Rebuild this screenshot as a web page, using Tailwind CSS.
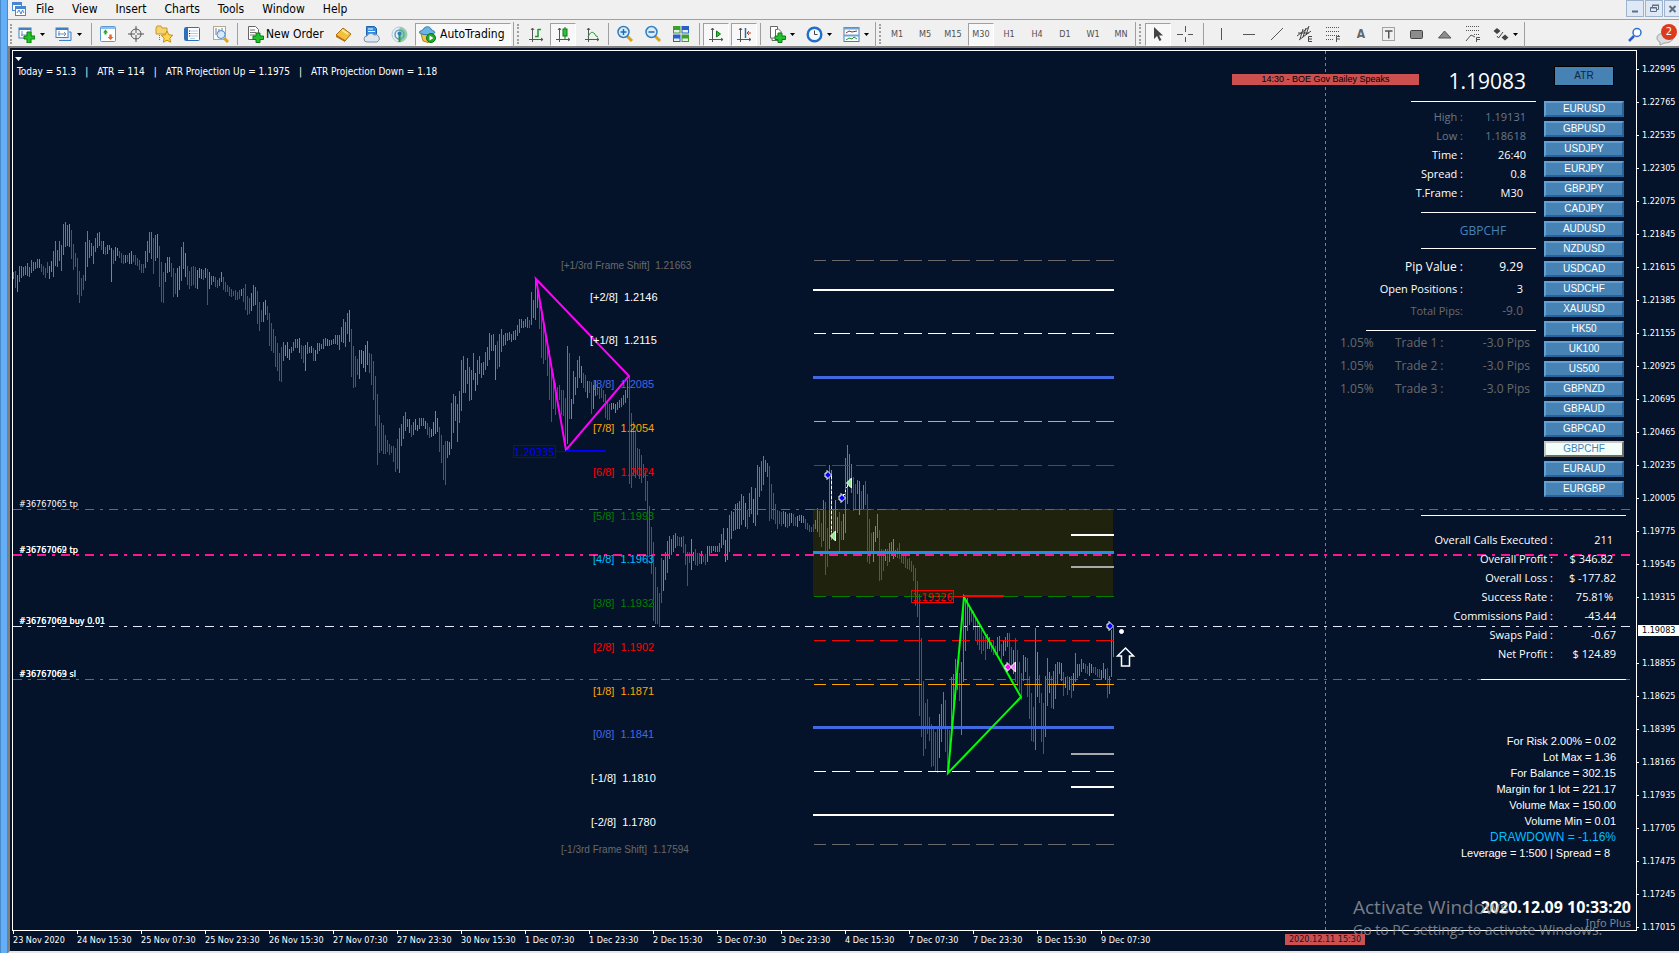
<!DOCTYPE html>
<html lang="en">
<head>
    <meta charset="UTF-8">
    <meta name="viewport" content="width=device-width, initial-scale=1.0">
    <title>GBPCHF,M30</title>
    <script src="https://cdn.jsdelivr.net/npm/@tailwindcss/browser@4"></script>
</head>
<body class="flex h-screen overflow-hidden bg-[#05132a] font-['DejaVu_Sans_Condensed','Noto_Sans',sans-serif] text-[12px] leading-4 text-black">

    <!-- window edge -->
    <div class="w-2 shrink-0 border-x border-[#4a8ac8] bg-[#62aef8]"></div>

    <div class="flex min-w-0 flex-1 flex-col">

        <!-- menu bar -->
        <nav class="flex h-[19px] shrink-0 items-center bg-[#f0f0f0] pb-[2px] pl-[3px]">
            <svg class="h-4 w-4" viewBox="0 0 16 16" fill="#fff" stroke="#4a86cf"><rect x="1.500" y="1.500" width="9" height="8"/><path d="M1 3h10" stroke-width="2"/><rect x="4.500" y="5.500" width="10" height="9"/><path d="M4 7h11" stroke-width="2"/><path d="M6 12l2-3 2 4 1.500-4 1.500 3" fill="none"/></svg>
            <button class="px-[9px]">File</button>
            <button class="px-[9px]">View</button>
            <button class="px-[9px]">Insert</button>
            <button class="px-[9px]">Charts</button>
            <button class="px-[9px]">Tools</button>
            <button class="px-[9px]">Window</button>
            <button class="px-[9px]">Help</button>
            <div class="ml-auto flex gap-px self-start">
                <button aria-label="Minimize" class="h-[17px] w-[18px] border border-[#9db4cc] bg-[#dfe9f5]"><svg viewBox="0 0 16 15"><path d="M5 10.500h6" stroke="#5c6f85" stroke-width="2"/></svg></button>
                <button aria-label="Restore" class="h-[17px] w-[18px] border border-[#9db4cc] bg-[#dfe9f5]"><svg viewBox="0 0 16 15" fill="none" stroke="#5c6f85"><path d="M6.500 6V4.500h6v4H11M6 4h7"/><path d="M4.500 6.500h6v4h-6zM4 7h7"/></svg></button>
                <button aria-label="Close" class="h-[17px] w-[15px] border border-r-0 border-[#9db4cc] bg-[#dfe9f5]"><svg viewBox="0 0 14 15"><path d="M4.500 5l6 6m0-6l-6 6" stroke="#5c6f85" stroke-width="2"/></svg></button>
            </div>
        </nav>

        <!-- toolbar -->
        <div class="flex h-[29px] shrink-0 items-center border-t border-b-2 border-t-[#a0a0a0] border-b-[#808080] bg-[#f0f0f0] pt-[2px] pl-[2px]">
            <i class="h-5 w-[3px] border-l-2 border-dotted border-[#a0a0a0]"></i>
            <button aria-label="New chart" class="flex w-[37px] items-center gap-[5px] pl-[5px]">
                <svg class="h-[17px] w-[17px]" viewBox="0 0 17 17"><rect x="1" y="2" width="12" height="10" fill="#fff" stroke="#3f7fc4"/><path d="M1 3h12" stroke="#3f7fc4" stroke-width="2"/><path d="M4 5v5M3 9h6" stroke="#6b8fb5"/><path d="M9 6h4v4h4v3h-4v4H9v-4H6v-3h3z" fill="#22c32b" stroke="#0b7d12"/></svg>
                <svg class="h-[3px] w-[5px]" viewBox="0 0 5 3"><path d="M0 0h5L2.500 3z"/></svg>
            </button>
            <button aria-label="Profiles" class="flex w-[37px] items-center gap-[5px] pl-[5px]">
                <svg class="h-[17px] w-[17px]" viewBox="0 0 17 17"><path d="M4 14.500h12V6h-2" fill="#dbe9f8" stroke="#3f7fc4"/><rect x="1" y="2" width="12" height="9.500" fill="#fff" stroke="#3f7fc4"/><path d="M1 3h12" stroke="#3f7fc4" stroke-width="2"/><path d="M4 5v5M3 8h8M9 6l2 2-2 2" fill="none" stroke="#6b8fb5"/></svg>
                <svg class="h-[3px] w-[5px]" viewBox="0 0 5 3"><path d="M0 0h5L2.500 3z"/></svg>
            </button>
            <i class="mr-[2px] ml-1 h-[22px] w-px bg-[#a0a0a0]"></i>
            <button aria-label="Market watch" class="w-7"><svg class="mx-auto h-4 w-4" viewBox="0 0 16 16"><rect x=".5" y=".5" width="15" height="15" rx="1" fill="#fff" stroke="#5b9bd5"/><path d="M1 2h14" stroke="#8fc0ec" stroke-width="2"/><path d="M5.500 3.500L3 6.500h1.500v2h2v-2H8z" fill="#22a52b"/><path d="M10.500 14L7.500 11h1.800V8.500h2.400V11h1.800z" fill="#f0602c"/></svg></button>
            <button aria-label="Data window" class="w-7"><svg class="mx-auto h-4 w-4" viewBox="0 0 16 16" fill="none" stroke="#555"><circle cx="8" cy="8" r="5"/><path d="M8 0v7M8 9v7M0 8h7M9 8h7"/></svg></button>
            <button aria-label="Navigator" class="w-7"><svg class="mx-auto h-[18px] w-[18px]" viewBox="0 0 18 18"><path d="M1 3l1-2h4l1 2h5v6H1z" fill="#f6d36b" stroke="#c79a2a"/><path d="M4.500 10v6" stroke="#777" stroke-dasharray="1 1"/><path d="M12 6l1.800 3.800 4 .5-3 2.800.8 4.100-3.600-2-3.600 2 .8-4.100-3-2.800 4-.5z" fill="#ffd84a" stroke="#c98d12"/></svg></button>
            <button aria-label="Terminal" class="w-7"><svg class="mx-auto h-4 w-4" viewBox="0 0 16 16"><rect x=".5" y="1.500" width="15" height="13" rx="1" fill="#fff" stroke="#2f6fb8"/><path d="M2.500 2v12" stroke="#2f6fb8" stroke-width="3"/><path d="M6 5h8M6 7.500h8M6 10h8M6 12.500h5" stroke="#b7cbe2"/><path d="M5 5h1M5 7.500h1M5 10h1" stroke="#223"/></svg></button>
            <button aria-label="Strategy tester" class="w-7"><svg class="mx-auto h-[17px] w-[17px]" viewBox="0 0 17 17"><rect x="1.500" y=".5" width="12" height="13" fill="#fafafa" stroke="#b5a98f"/><path d="M4 2v7M7 3v5M10 2v4" stroke="#6b7f95"/><path d="M12 12l4 4" stroke="#d9a21f" stroke-width="3"/><circle cx="9" cy="8.500" r="4" fill="#cfe6fb" fill-opacity=".8" stroke="#4f8fce"/></svg></button>
            <i class="mr-[2px] ml-[3px] h-[22px] w-px bg-[#a0a0a0]"></i>
            <button class="flex w-[89px] items-center gap-[2px] pl-[7px] whitespace-nowrap">
                <svg class="h-[17px] w-[17px] shrink-0" viewBox="0 0 17 17"><path d="M1.500.5h7l3 3v10h-10z" fill="#fff" stroke="#666"/><path d="M3 4h5M3 6.500h6M3 9h5" stroke="#777"/><path d="M9 7h4v3h3.500v3.500H13v3H9v-3H6V10h3z" fill="#22c32b" stroke="#0b7d12"/></svg>
                New Order
            </button>
            <button aria-label="MetaEditor" class="w-7"><svg class="mx-auto h-[17px] w-[17px]" viewBox="0 0 17 17"><path d="M1 9l7-7 8 6-6 7z" fill="#f4bf3a" stroke="#a86d0c"/><path d="M1 9l9 5v2L1 11z" fill="#b57412"/><path d="M7 4l6 4" stroke="#ffe694" stroke-width="2"/></svg></button>
            <button aria-label="Cloud" class="w-7"><svg class="mx-auto h-[17px] w-[17px]" viewBox="0 0 17 17"><path d="M3.500.5h8l2 2v7h-10z" fill="#2f8fe6" stroke="#1c62ad"/><path d="M5 3h5M5 5.500h7" stroke="#fff"/><path d="M4 16a3 3 0 010-6 4 4 0 017-1 3.500 3.500 0 013 7z" fill="#dfe6ee" stroke="#7f93aa"/></svg></button>
            <button aria-label="Signals" class="w-7"><svg class="mx-auto h-[17px] w-[17px]" viewBox="0 0 17 17" fill="none"><circle cx="8.500" cy="8.500" r="7.500" stroke="#a9cbe0"/><path d="M8.500 1a7.500 7.500 0 010 15z" fill="#8fd09a"/><circle cx="8.500" cy="8.500" r="4.500" stroke="#5f9fc4" stroke-width="1.500"/><circle cx="8.500" cy="7.500" r="2" fill="#2f7fc0"/><path d="M8.500 9v7" stroke="#2c9c3c" stroke-width="2"/></svg></button>
            <button class="ml-[2px] flex h-[23px] w-24 items-center gap-1 border border-t-[#a0a0a0] border-r-white border-b-white border-l-[#a0a0a0] bg-[#f8f8f8] pl-[3px] whitespace-nowrap">
                <svg class="h-[17px] w-[17px] shrink-0" viewBox="0 0 17 17"><path d="M2 8l2 7 5 1.500 4-3V8z" fill="#f2c14a" stroke="#b5841b"/><path d="M0 6.500C1 4 4 5 4.500 3 6 0 11 0 12 3c.5 2 3 1 4 3.500-3 3-12 3-16 0z" fill="#69b5e6" stroke="#3579ab"/><circle cx="12" cy="12" r="4.500" fill="#1fa92c" stroke="#0c7216"/><path d="M10.500 9.500v5l4-2.500z" fill="#fff"/></svg>
                AutoTrading
            </button>
            <i class="mr-[3px] ml-[2px] h-[25px] w-px bg-[#a0a0a0]"></i>
            <i class="mr-[2px] h-5 w-[3px] border-l-2 border-dotted border-[#a0a0a0]"></i>
            <button aria-label="Bar chart" class="w-7"><svg class="mx-auto h-[15px] w-[15px]" viewBox="0 0 15 15" fill="none" stroke="#555"><path d="M3.500 1v14M0 12.500h14M2 3l1.500-2L5 3M12 11l2 1.500-2 1.500"/><path d="M6 9.500h3V2M9 2.500h3" stroke="#1a9a2a" stroke-width="1.500"/></svg></button>
            <button aria-label="Candlesticks" class="h-[23px] w-[26px] border border-t-[#a0a0a0] border-r-white border-b-white border-l-[#a0a0a0] bg-[#f8f8f8]"><svg class="mx-auto h-[15px] w-[15px]" viewBox="0 0 15 15" fill="none" stroke="#555"><path d="M3.500 1v14M0 12.500h14M2 3l1.500-2L5 3M12 11l2 1.500-2 1.500"/><path d="M9 0v12" stroke="#0b7d12"/><rect x="7" y="2" width="4" height="7" fill="#2fc23a" stroke="#0b7d12"/></svg></button>
            <button aria-label="Line chart" class="ml-[2px] w-7"><svg class="mx-auto h-[15px] w-[15px]" viewBox="0 0 15 15" fill="none" stroke="#555"><path d="M3.500 1v14M0 12.500h14M2 3l1.500-2L5 3M12 11l2 1.500-2 1.500"/><path d="M3 10c2-5 5-7 8-1l2 1" stroke="#1a9a2a"/></svg></button>
            <i class="mr-[2px] ml-[2px] h-[22px] w-px bg-[#a0a0a0]"></i>
            <button aria-label="Zoom in" class="w-7"><svg class="mx-auto h-[18px] w-[18px]" viewBox="0 0 18 18"><path d="M11 11l5 5" stroke="#d9a21f" stroke-width="3"/><circle cx="7.500" cy="7" r="5.500" fill="#d8ecfc" stroke="#2f7fc4" stroke-width="1.500"/><path d="M4.500 7h6M7.500 4v6" stroke="#2567ae" stroke-width="1.500"/></svg></button>
            <button aria-label="Zoom out" class="w-7"><svg class="mx-auto h-[18px] w-[18px]" viewBox="0 0 18 18"><path d="M11 11l5 5" stroke="#d9a21f" stroke-width="3"/><circle cx="7.500" cy="7" r="5.500" fill="#d8ecfc" stroke="#2f7fc4" stroke-width="1.500"/><path d="M4.500 7h6" stroke="#2567ae" stroke-width="1.500"/></svg></button>
            <button aria-label="Tile windows" class="w-7"><svg class="mx-auto h-4 w-4" viewBox="0 0 16 16"><path d="M0 0h7.500v7.500H0zM8.500 8.500H16V16H8.500z" fill="#3f9f2c"/><path d="M8.500 0H16v7.500H8.500zM0 8.500h7.500V16H0z" fill="#2a5fd0"/><path d="M1 4h5.500v2.500H1zM9.500 4H15v2.500H9.500zM1 12.500h5.500V15H1zM9.500 12.500H15V15H9.500z" fill="#e6f0e6"/></svg></button>
            <i class="mr-[3px] ml-[4px] h-[22px] w-px bg-[#a0a0a0]"></i>
            <button aria-label="Auto scroll" class="h-[23px] w-[26px] border border-t-[#a0a0a0] border-r-white border-b-white border-l-[#a0a0a0] bg-[#f8f8f8]"><svg class="mx-auto h-[15px] w-[15px]" viewBox="0 0 15 15" fill="none" stroke="#555"><path d="M3.500 1v14M0 12.500h14M2 3l1.500-2L5 3M12 11l2 1.500-2 1.500"/><path d="M7.500 4v6l4-3z" fill="#2fc23a" stroke="#0b7d12"/></svg></button>
            <button aria-label="Chart shift" class="ml-[2px] h-[23px] w-[26px] border border-t-[#a0a0a0] border-r-white border-b-white border-l-[#a0a0a0] bg-[#f8f8f8]"><svg class="mx-auto h-[15px] w-[15px]" viewBox="0 0 15 15" fill="none" stroke="#555"><path d="M3.500 1v14M0 12.500h14M2 3l1.500-2L5 3M12 11l2 1.500-2 1.500"/><path d="M8.500 1v10" stroke="#1f6fb0" stroke-width="1.500"/><path d="M14 6h-4M12 4l-2 2 2 2" stroke="#b8401c"/></svg></button>
            <i class="mr-[3px] ml-[3px] h-[22px] w-px bg-[#a0a0a0]"></i>
            <button aria-label="Indicators" class="flex w-[37px] items-center gap-[4px] pl-[5px]">
                <svg class="h-[17px] w-[17px]" viewBox="0 0 17 17"><path d="M3 2.500h6l3 3v9H3z" fill="#fff" stroke="#666"/><path d="M1.500.5h7v3h-2V12h-5z" fill="#fff" stroke="#666"/><path d="M9 7h4v3h3.500v3.500H13v3H9v-3H6V10h3z" fill="#22c32b" stroke="#0b7d12"/></svg>
                <svg class="h-[3px] w-[5px]" viewBox="0 0 5 3"><path d="M0 0h5L2.500 3z"/></svg>
            </button>
            <button aria-label="Periods" class="flex w-[37px] items-center gap-[4px] pl-[5px]">
                <svg class="h-[17px] w-[17px]" viewBox="0 0 17 17"><circle cx="8.500" cy="8.500" r="6.800" fill="#f4f9ff" stroke="#1f6fc8" stroke-width="2.400"/><path d="M8.500 4.500v4h3" fill="none" stroke="#444"/></svg>
                <svg class="h-[3px] w-[5px]" viewBox="0 0 5 3"><path d="M0 0h5L2.500 3z"/></svg>
            </button>
            <button aria-label="Templates" class="flex w-[37px] items-center gap-[4px] pl-[5px]">
                <svg class="h-[17px] w-[17px]" viewBox="0 0 17 17" fill="none"><rect x="1" y="1.500" width="15" height="14" fill="#fff" stroke="#3f7fc4"/><path d="M1 2.500h15M1 9.500h15" stroke="#6ea6dc" stroke-width="2"/><path d="M3 7l3-2 3 1 5-1" stroke="#9c2f1f"/><path d="M3 14l3-2 3 1 2-2 3 2" stroke="#1f8f2f"/></svg>
                <svg class="h-[3px] w-[5px]" viewBox="0 0 5 3"><path d="M0 0h5L2.500 3z"/></svg>
            </button>
            <i class="mr-[3px] h-[25px] w-px bg-[#a0a0a0]"></i>
            <i class="mr-px h-5 w-[3px] border-l-2 border-dotted border-[#a0a0a0]"></i>
            <div class="flex text-[9px] text-[#505050]">
                <button class="h-[23px] w-7">M1</button>
                <button class="h-[23px] w-7">M5</button>
                <button class="h-[23px] w-7">M15</button>
                <button class="mx-px h-[23px] w-[26px] border border-t-[#a0a0a0] border-r-white border-b-white border-l-[#a0a0a0] bg-[#f8f8f8]">M30</button>
                <button class="h-[23px] w-7">H1</button>
                <button class="h-[23px] w-7">H4</button>
                <button class="h-[23px] w-7">D1</button>
                <button class="h-[23px] w-7">W1</button>
                <button class="h-[23px] w-7">MN</button>
            </div>
            <i class="mr-[3px] h-[25px] w-px bg-[#a0a0a0]"></i>
            <i class="mr-[3px] h-5 w-[3px] border-l-2 border-dotted border-[#a0a0a0]"></i>
            <button aria-label="Cursor" class="h-[23px] w-[26px] border border-t-[#a0a0a0] border-r-white border-b-white border-l-[#a0a0a0] bg-[#f8f8f8]"><svg class="mx-auto h-[15px] w-[15px]" viewBox="0 0 15 15"><path d="M3 0v12l3-3 2.500 5 2-1L8 8.500h4z" fill="#444"/></svg></button>
            <button aria-label="Crosshair" class="w-7"><svg class="mx-auto h-4 w-4" viewBox="0 0 16 16"><path d="M8.500 0v6M8.500 11v5M0 8.500h6M11 8.500h5" stroke="#555"/></svg></button>
            <i class="mr-[3px] ml-[4px] h-[22px] w-px bg-[#a0a0a0]"></i>
            <button aria-label="Vertical line" class="w-7"><svg class="mx-auto h-4 w-4" viewBox="0 0 16 16"><path d="M8.500 2v12" stroke="#555"/></svg></button>
            <button aria-label="Horizontal line" class="w-7"><svg class="mx-auto h-4 w-4" viewBox="0 0 16 16"><path d="M2 8.500h12" stroke="#555"/></svg></button>
            <button aria-label="Trendline" class="w-7"><svg class="mx-auto h-4 w-4" viewBox="0 0 16 16"><path d="M2 14L14 2" stroke="#555"/></svg></button>
            <button aria-label="Equidistant channel" class="w-7"><svg class="mx-auto h-4 w-4" viewBox="0 0 16 16" fill="none" stroke="#444"><path d="M0 10l12-9M2 14l12-9M3 13L6 3M6 11l3-9M9 9l3-9M1 7h11"/><path d="M15 10.500h-3.500v5H15M12 13h3"/></svg></button>
            <button aria-label="Fibonacci retracement" class="w-7"><svg class="mx-auto h-4 w-4" viewBox="0 0 16 16" fill="none" stroke="#555"><path d="M1 1.500h13M1 5.500h13M1 9.500h13M1 13.500h8" stroke-dasharray="1 1"/><path d="M15 10.500h-3.500v5.500M12 13h3"/></svg></button>
            <button aria-label="Text" class="w-7 font-bold text-[#666]">A</button>
            <button aria-label="Text label" class="w-7"><svg class="mx-auto h-4 w-4" viewBox="0 0 16 16" fill="none" stroke="#555"><rect x="1.500" y="1.500" width="12" height="13" stroke-dasharray="1 1"/><path d="M4 5h7.500" stroke-width="1.500"/><path d="M7.750 5v7.500" stroke-width="1.500"/></svg></button>
            <button aria-label="Rectangle" class="w-7"><svg class="mx-auto h-4 w-4" viewBox="0 0 16 16"><rect x="1.500" y="4.500" width="12" height="8" rx="1" fill="#8c8c8c" stroke="#444"/></svg></button>
            <button aria-label="Triangle" class="w-7"><svg class="mx-auto h-4 w-4" viewBox="0 0 16 16"><path d="M1.500 12L7.500 5l6.500 7z" fill="#8c8c8c" stroke="#555"/></svg></button>
            <button aria-label="Fibonacci expansion" class="w-7"><svg class="mx-auto h-4 w-4" viewBox="0 0 16 16" fill="none" stroke="#555"><path d="M1 .5h14M1 4.500h14M9 8.500h6" stroke-dasharray="1 1"/><path d="M1 15l5-6 4 2M15 11.500h-3.500V16M12 13.500h3"/></svg></button>
            <button aria-label="Arrows" class="flex w-[37px] items-center gap-[4px] pl-[6px]">
                <svg class="h-4 w-4" viewBox="0 0 16 16" fill="#444"><path d="M4 2l3.500 3L4 8 .5 5zM12 8.500l3.500 3-3.500 3-3.500-3z"/><path d="M4 10l1.500 2L10 6" fill="none" stroke="#444"/></svg>
                <svg class="h-[3px] w-[5px]" viewBox="0 0 5 3"><path d="M0 0h5L2.500 3z"/></svg>
            </button>
            <i class="h-[25px] w-px bg-[#a0a0a0]"></i>
            <button aria-label="Search" class="ml-auto"><svg class="h-[15px] w-[15px]" viewBox="0 0 15 15"><path d="M6 9l-5 5" stroke="#2a5fd0" stroke-width="2.500"/><circle cx="9" cy="5.500" r="4" fill="#fff" stroke="#2f6fd6" stroke-width="1.500"/></svg></button>
            <button aria-label="Messages" class="relative ml-[10px] h-[25px] w-[26px]">
                <svg class="h-full w-full" viewBox="0 0 26 25"><path d="M12 11c-5 0-8 2-8 5 0 2 1 3 3 4l0 3 4-2c5 0 9-2 9-5s-3-5-8-5z" fill="#dadde0" stroke="#9aa0a6"/></svg>
                <span class="absolute top-[2px] right-[2px] h-4 w-4 rounded-full bg-[#dc3a1c] text-center text-[11px] leading-4 text-white">2</span>
            </button>
        </div>

        <!-- chart window -->
        <main class="flex min-h-0 flex-1 flex-col border-b-2 border-l-2 border-b-[#e6e6e6] border-l-[#808080] pt-[2px] pl-[2px] text-white">
            <div class="flex min-h-0 flex-1">
                <section class="relative min-w-0 flex-1 border border-white">
                    <svg class="absolute inset-0 h-full w-full" viewBox="13 51 1623 879" preserveAspectRatio="xMinYMin meet" fill="none" shape-rendering="crispEdges">
                        <rect x="813" y="510" width="300" height="86" fill="#1f220d"/>
                        <path d="M1325.500 51V930" stroke="#cd5c5c" stroke-dasharray="3 3"/>
                        <g id="bars"></g>

                        <!-- murrey levels -->
                        <g stroke-dasharray="18 6" stroke-dashoffset="6">
                            <path d="M814 260.500h300M814 844.500h300" stroke="#696969"/>
                            <path d="M814 333.500h300" stroke="#fff"/>
                            <path d="M814 771.500h300" stroke="#fff"/>
                            <path d="M814 421.500h300" stroke="#ffa500"/>
                            <path d="M814 684.500h300" stroke="#ffa500"/>
                            <path d="M814 465.500h300" stroke="#ff0000"/>
                            <path d="M814 640.500h300" stroke="#ff0000"/>
                            <path d="M814 509.500h300" stroke="#008000"/>
                            <path d="M814 596.500h300" stroke="#008000"/>
                        </g>
                        <path d="M813 290h301M813 815h301M1071 535h43M1071 787h43" stroke="#fff" stroke-width="2"/>
                        <path d="M1071 567h43M1071 754h43" stroke="#a9a9a9" stroke-width="2"/>
                        <path d="M813 377.500h301M813 727.500h301" stroke="#4169e1" stroke-width="3"/>
                        <path d="M813 552.500h301" stroke="#1e90e8" stroke-width="3"/>

                        <!-- order lines -->
                        <g stroke-dasharray="9 6 3 6">
                            <path d="M13 509.500H1630" stroke="#ff1493"/>
                            <path d="M13 555H1630" stroke="#ff1493" stroke-width="2"/>
                            <path d="M13 626.500H1630" stroke="#e6e6fa"/>
                            <path d="M13 679.500H1630" stroke="#ff1493"/>
                        </g>
                        <path d="M831.500 476v56M843 497l5-12" stroke="#fff" stroke-dasharray="3 2"/>

                        <g shape-rendering="auto">
                            <path d="M536 279l93 97-63 74z" stroke="#ff00ff" stroke-width="2"/>
                            <path d="M964 597l57 100-73 76z" stroke="#00ff00" stroke-width="2"/>
                        </g>
                        <path d="M556 451.500h10" stroke="#0000ff"/>
                        <path d="M566 451h40" stroke="#0000ff" stroke-width="2"/>
                        <rect x="513.500" y="445.500" width="42" height="12" stroke="#0000ff"/>
                        <path d="M954 596.500h10" stroke="#ff0000"/>
                        <path d="M964 596h40" stroke="#ff0000" stroke-width="2"/>
                        <rect x="911.500" y="590.500" width="42" height="12" stroke="#ff0000"/>

                        <!-- trade arrows -->
                        <g shape-rendering="auto" stroke="#fff">
                            <path id="buy" d="M825 473h2v-2.500l4.500 4.500-4.500 4.500V477h-2z" fill="#0000ff"/>
                            <use href="#buy" x="14" y="23"/>
                            <use href="#buy" x="282" y="151"/>
                            <path d="M851.500 478v10l-5-5z" fill="#90ee90"/>
                            <path d="M835.500 531v10l-5-5z" fill="#90ee90"/>
                            <path d="M1005 665h2v-2.500l4.500 4.500-4.500 4.500V669h-2z" fill="#ff00ff"/>
                            <path d="M1015.500 662v10l-5-5z" fill="#ee82ee"/>
                            <circle cx="1121.500" cy="631.500" r="2" fill="#fff"/>
                            <path d="M1125.500 648l8 8h-4V666h-8v-10h-4z" stroke-width="1.500"/>
                            <path d="M15 57h7l-3.500 4z" fill="#fff" stroke="none"/>
                        </g>

                        <g class="font-['DejaVu_Sans_Condensed','Noto_Sans',sans-serif] text-[9px]" fill="#fff">
                            <text x="19" y="507">#36767065 tp</text>
                            <text x="19" y="553">#36767062 tp</text><text x="19" y="553">#36767069 tp</text>
                            <text x="19" y="624">#36767063 buy 0.01</text><text x="19" y="624">#36767069 buy 0.01</text>
                            <text x="19" y="677">#36767063 sl</text><text x="19" y="677">#36767069 sl</text>
                        </g>
                        <g class="font-['DejaVu_Sans_Condensed','Noto_Sans',sans-serif] text-[11px]">
                            <text x="514" y="456" fill="#0000ff">1.20335</text>
                            <text x="912" y="601" fill="#ff0000">1.19326</text>
                        </g>
                        <g class="font-['Liberation_Sans',Arial,sans-serif] text-[10px]" fill="#696969">
                            <text x="561" y="269">[+1/3rd Frame Shift] &nbsp;1.21663</text>
                            <text x="561" y="853">[-1/3rd Frame Shift] &nbsp;1.17594</text>
                        </g>
                        <g class="font-['Liberation_Sans',Arial,sans-serif] text-[11px]">
                            <text x="590" y="301" fill="#fff">[+2/8] &nbsp;1.2146</text>
                            <text x="590" y="344" fill="#fff">[+1/8] &nbsp;1.2115</text>
                            <text x="593" y="388" fill="#4169e1">[8/8] &nbsp;1.2085</text>
                            <text x="593" y="432" fill="#ffa500">[7/8] &nbsp;1.2054</text>
                            <text x="593" y="476" fill="#ff0000">[6/8] &nbsp;1.2024</text>
                            <text x="593" y="520" fill="#008000">[5/8] &nbsp;1.1993</text>
                            <text x="593" y="563" fill="#00bfff">[4/8] &nbsp;1.1963</text>
                            <text x="593" y="607" fill="#008000">[3/8] &nbsp;1.1932</text>
                            <text x="593" y="651" fill="#ff0000">[2/8] &nbsp;1.1902</text>
                            <text x="593" y="695" fill="#ffa500">[1/8] &nbsp;1.1871</text>
                            <text x="593" y="738" fill="#4169e1">[0/8] &nbsp;1.1841</text>
                            <text x="591" y="782" fill="#fff">[-1/8] &nbsp;1.1810</text>
                            <text x="591" y="826" fill="#fff">[-2/8] &nbsp;1.1780</text>
                        </g>
                    </svg>

                    <!-- ATR line -->
                    <p class="absolute top-[13px] left-[4px] flex gap-[9px] text-[10px] leading-4 whitespace-nowrap">
                        <span>Today = 51.3</span><span>|</span><span>ATR = 114</span><span>|</span><span>ATR Projection Up = 1.1975</span><span>|</span><span>ATR Projection Down = 1.18</span>
                    </p>

                    <p class="absolute top-[23px] right-[217px] h-[11px] w-[187px] bg-[#cd5050] text-center font-['Liberation_Sans',Arial,sans-serif] text-[9px] leading-[11px] text-black">14:30 - BOE Gov Bailey Speaks</p>

                    <!-- symbol info -->
                    <aside class="absolute top-[15px] right-[100px] flex w-[196px] flex-col items-end font-['Open_Sans','Noto_Sans',sans-serif] text-[11px] leading-[19px]">
                        <p class="mb-[5px] pr-[10px] text-[21px] leading-[30px]">1.19083</p>
                        <hr class="mb-[5px] w-[125px] border-white">
                        <dl class="grid grid-cols-[1fr_63px] pr-[10px] text-right">
                            <dt class="text-[#6b7886]">High :</dt><dd class="text-[#6b7886]">1.19131</dd>
                            <dt class="text-[#6b7886]">Low :</dt><dd class="text-[#6b7886]">1.18618</dd>
                            <dt>Time :</dt><dd>26:40</dd>
                            <dt>Spread :</dt><dd>0.8</dd>
                            <dt>T.Frame :</dt><dd class="pr-[3px]">M30</dd>
                        </dl>
                        <hr class="mt-[10px] w-[115px] border-white">
                        <p class="w-[106px] text-center text-[12px] leading-[35px] text-[#4682b4]">GBPCHF</p>
                        <hr class="mb-[7px] w-[115px] border-white">
                        <dl class="mb-[8px] grid grid-cols-[1fr_60px] pr-[13px] text-right text-[12px] leading-[22px]">
                            <dt>Pip Value :</dt><dd>9.29</dd>
                            <dt class="text-[11px]">Open Positions :</dt><dd class="text-[11px]">3</dd>
                            <dt class="text-[11px] text-[#696969]">Total Pips:</dt><dd class="text-[#696969]">-9.0</dd>
                        </dl>
                        <hr class="w-[170px] border-white">
                        <table class="w-full text-[12px] leading-[23px] text-[#696969]">
                            <tr><td class="w-[55px]">1.05%</td><td>Trade 1 :</td><td class="pr-[6px] text-right">-3.0 Pips</td></tr>
                            <tr><td>1.05%</td><td>Trade 2 :</td><td class="pr-[6px] text-right">-3.0 Pips</td></tr>
                            <tr><td>1.05%</td><td>Trade 3 :</td><td class="pr-[6px] text-right">-3.0 Pips</td></tr>
                        </table>
                    </aside>

                    <!-- pair buttons -->
                    <button class="absolute top-[15px] right-[22px] h-5 w-[60px] border border-black bg-[#4682b4] font-['Liberation_Sans',Arial,sans-serif] text-[10px] text-[#10253f]">ATR</button>
                    <div id="pairs" class="absolute top-[50px] right-[12px] flex w-20 flex-col gap-1 font-['Liberation_Sans',Arial,sans-serif] text-[10px]"></div>

                    <!-- account stats -->
                    <aside class="absolute top-[464px] right-[10px] flex w-[205px] flex-col items-end font-['Open_Sans','Noto_Sans',sans-serif] text-[11px] leading-[19px]">
                        <hr class="mb-[14px] w-full border-white">
                        <dl class="grid grid-cols-[1fr_63px] pr-[10px] text-right whitespace-nowrap">
                            <dt>Overall Calls Executed :</dt><dd class="pr-[3px]">211</dd>
                            <dt>Overall Profit :</dt><dd class="pr-[3px]">$ 346.82</dd>
                            <dt>Overall Loss :</dt><dd>$ -177.82</dd>
                            <dt>Success Rate :</dt><dd class="pr-[3px]">75.81%</dd>
                            <dt>Commissions Paid :</dt><dd>-43.44</dd>
                            <dt>Swaps Paid :</dt><dd>-0.67</dd>
                            <dt>Net Profit :</dt><dd>$ 124.89</dd>
                        </dl>
                        <hr class="mt-[16px] w-[145px] border-white">
                    </aside>

                    <!-- risk -->
                    <ul class="absolute top-[682px] right-[20px] text-right font-['Liberation_Sans',Arial,sans-serif] text-[11px] leading-4">
                        <li>For Risk 2.00% = 0.02</li>
                        <li>Lot Max = 1.36</li>
                        <li>For Balance = 302.15</li>
                        <li>Margin for 1 lot = 221.17</li>
                        <li>Volume Max = 150.00</li>
                        <li>Volume Min = 0.01</li>
                        <li class="text-[12px] text-[#00bfff]">DRAWDOWN = -1.16%</li>
                        <li class="pr-[6px]">Leverage = 1:500 | Spread = 8</li>
                    </ul>

                    <!-- clock -->
                    <div class="absolute top-[846px] right-[5px] text-right font-['Noto_Sans','Open_Sans',sans-serif]">
                        <p class="text-[16px] leading-5 font-bold">2020.12.09 10:33:20</p>
                        <p class="text-[11px] leading-3 text-[#7b8694]">Info Plus</p>
                    </div>
                    <div class="absolute top-[844px] right-[29px] w-[254px] font-['Open_Sans','Noto_Sans',sans-serif] whitespace-nowrap text-[#a0a4a9]/75">
                        <p class="text-[19px] leading-6">Activate Windows</p>
                        <p class="text-[14px] leading-[22px]">Go to PC settings to activate Windows.</p>
                    </div>
                </section>

                <!-- price scale -->
                <div id="prices" class="flex w-[42px] shrink-0 flex-col pt-[3px] text-[9px] leading-[11px]"></div>
            </div>

            <!-- time scale -->
            <div class="relative h-5 shrink-0 text-[9px]">
                <div id="times" class="flex pl-px"></div>
                <span class="absolute top-[3px] right-[314px] h-[11px] w-20 bg-[#cd5050] text-center leading-[11px] whitespace-nowrap text-[#10182a]">2020.12.11 15:30</span>
            </div>
        </main>
    </div>

    <script>
        // one entry per bar: colour, high, low
        const bars = `
        B272,279 R271,288 G275,292 B266,282 B266,278 B267,276 B266,275 B263,276 B267,277 B260,273 B262,271 B262,269 B259,268 G259,268 R264,272 R266,275 R268,278 R262,273 G266,279 G261,272
        B251,277 B241,266 B250,267 B241,261 B245,271 B224,255 B222,247 B225,246 G224,247 R230,259 R244,270 R253,267 R258,295 R271,303 R278,296 R275,290 B242,281 B231,267 B240,258 B243,256
        B246,264 B238,252 B233,248 B232,246 R241,250 G241,254 R247,255 G245,254 B245,250 G248,282 R250,264 G247,261 G248,256 R251,258 R253,263 R255,264 G255,263 R255,262 G253,264 G251,264
        R255,262 R255,265 R258,266 R260,270 R264,273 R264,273 B251,268 B241,262 B232,253 B232,259 R238,274 B235,261 G234,258 R246,287 R262,302 R272,303 B263,282 G257,273 G257,272 R263,277
        R268,297 R273,294 G268,297 G266,290 B247,281 B242,269 G253,277 R266,285 R271,289 R267,286 R266,285 R267,288 G270,289 G268,278 G269,279 R270,280 G268,278 R269,305 G272,289 B276,285
        B276,282 R277,287 R280,288 B278,286 G272,282 R277,290 R282,292 R285,292 R287,296 R289,297 R291,296 R290,300 R292,300 R290,299 G289,296 R288,302 R284,310 R296,315 R298,314 G293,311
        B285,306 B287,305 R291,324 R302,331 R310,322 G302,322 G300,315 R306,320 R313,346 R323,351 R329,353 R336,367 R343,371 R353,381 R347,382 B342,361 G345,356 G342,358 G349,360 B347,353
        B342,351 B339,348 B339,348 G338,353 R345,359 R346,363 G345,371 B342,354 B347,353 G346,353 R348,361 G350,361 B343,354 B343,351 B344,349 B339,349 B338,346 G339,346 B340,346 B340,345
        B339,344 B335,344 B335,345 B335,350 B327,342 B319,343 B322,347 B313,334 G310,342 R329,377 R346,388 R356,387 R359,375 G350,379 G350,364 G351,368 G345,372 G341,365 R353,373 R354,385
        R361,400 R376,426 R394,465 R415,453 R423,451 R425,454 R435,454 R440,452 R444,455 R446,453 R446,462 R448,472 R439,469 B428,473 B424,446 B416,439 B412,431 B419,427 G419,433 R425,437
        B422,435 G419,430 G425,431 B418,429 B418,426 B418,426 G421,429 R423,435 R427,438 G429,437 G422,436 G411,434 G418,432 R427,452 R435,463 R445,480 R441,485 B441,458 G442,455 B403,449
        B394,433 B396,421 B404,442 B391,423 B360,411 B356,393 B370,393 B358,384 B367,401 B370,400 B353,380 G373,391 B360,385 B356,374 B363,378 B362,375 B352,370 B347,366 B333,360 B335,351
        B334,351 G345,380 R341,369 B334,367 B329,352 B335,346 B333,345 B333,341 B332,340 B334,342 B331,340 B330,340 B325,336 B319,333 B319,328 B321,328 B319,327 B317,328 R320,328 B292,325
        B300,318 B279,320 B280,308 R295,329 R309,358 R320,364 R330,360 R339,376 R350,400 R365,422 R373,409 R383,415 R387,407 R385,400 R390,415 R390,416 R398,449 B346,444 R353,419 G399,419
        B371,404 B377,395 B360,388 B356,378 G366,383 R373,388 R375,392 G381,398 R381,393 R382,414 G385,409 B380,396 R384,395 R387,399 R388,398 R390,402 R394,418 R402,420 R404,420 G403,410
        G403,409 G404,413 B402,410 B400,408 B398,407 B395,405 B390,403 B380,398 R376,484 R413,488 R422,475 R430,478 R448,475 R449,479 R455,483 R464,478 R470,501 R481,564 R506,555 R527,574
        R542,621 R567,624 R587,624 R593,627 R558,603 G560,591 B552,580 B541,573 B536,559 B539,555 B535,552 B533,548 R536,546 R537,546 B537,547 R536,553 R544,565 R552,586 R552,563 G539,570
        G552,561 R549,565 R553,566 R553,564 G551,564 R556,562 R554,565 G546,562 B546,555 B546,553 B546,551 B546,552 B546,552 B543,552 B534,548 B528,545 G540,562 G528,560 B515,552 B511,539
        B512,531 B504,530 B503,529 B501,529 B494,525 B496,520 G503,527 R510,529 B493,517 B487,514 G499,523 B488,526 B465,515 B467,497 B461,491 B456,485 B460,472 B463,477 R466,521 R484,519
        R493,520 R504,524 R510,529 R511,524 R512,526 B511,524 G512,527 R514,528 B513,526 G513,523 R514,526 R517,526 G516,527 B515,521 G515,523 B516,523 R519,529 R523,530 R525,532 R527,532
        R524,532 B520,529 B508,532 R511,537 R523,547 B500,541 R502,575 R528,567 B465,549 G470,540 R510,540 G500,536 G517,533 R512,552 R521,540 G514,540 B458,533 B445,504 B454,487 B464,493
        R477,511 R484,509 B480,494 G481,515 R491,509 G485,510 R481,505 R494,562 R519,564 R533,552 G532,562 G526,542 B514,538 R530,581 R549,580 R550,571 G549,561 R549,566 B543,562 B542,556
        G539,559 B550,557 R548,558 R543,559 R552,563 R555,564 R556,568 R559,569 R558,570 R561,572 R565,581 R568,606 R581,617 R594,716 R638,737 R681,756 R703,749 R699,734 R717,741 R724,767
        R729,766 R732,772 R727,773 G714,758 B704,742 B692,727 R700,752 R727,773 R730,760 B677,740 B674,708 B659,700 B660,690 R673,701 B662,735 B598,682 B598,651 B598,631 B607,625 R610,622
        R611,630 R617,641 R619,645 R626,650 R630,654 R636,651 R637,660 B634,649 G637,649 R642,652 R641,655 R646,655 B637,655 B636,651 R644,663 G640,656 B637,651 B633,647 R633,664 R647,669
        G650,674 R638,682 R650,686 R662,691 R673,700 B655,681 B657,672 R658,697 R676,719 R693,741 R707,742 B628,750 G652,697 R675,703 R693,742 R703,754 B676,737 B658,706 G672,693 R676,708
        B671,709 B664,699 B662,685 B662,674 G663,681 R672,696 G677,688 R676,695 G677,690 R676,698 G673,691 B653,682 B664,678 B664,676 B659,672 B663,669 R664,673 R666,674 G663,676 G664,673
        R667,673 R667,675 R669,677 R669,678 G670,680 B663,678 G669,680 R668,698 B676,694 B630,677 B627,657`.trim().split(/\s+/);

        const colours = { B: '#4682b4', R: '#d8163f', G: '#848484' };
        const paths = { B: '', R: '', G: '' };
        bars.forEach((bar, i) => {
            const [high, low] = bar.slice(1).split(',');
            paths[bar[0]] += `M${13.5 + i * 2} ${high}V${low}`;
        });
        document.getElementById('bars').innerHTML = Object.keys(paths)
            .map(c => `<path d="${paths[c]}" stroke="${colours[c]}"/>`).join('');

        const pairs = ['EURUSD', 'GBPUSD', 'USDJPY', 'EURJPY', 'GBPJPY', 'CADJPY', 'AUDUSD', 'NZDUSD', 'USDCAD', 'USDCHF',
            'XAUUSD', 'HK50', 'UK100', 'US500', 'GBPNZD', 'GBPAUD', 'GBPCAD', 'GBPCHF', 'EURAUD', 'EURGBP'];
        document.getElementById('pairs').innerHTML = pairs.map(p => p === 'GBPCHF'
            ? `<button class="h-4 border-2 border-t-[#c8c8c8] border-r-[#6e6e64] border-b-[#6e6e64] border-l-[#c8c8c8] bg-[#f5fffa] leading-3 text-[#4682b4]">${p}</button>`
            : `<button class="h-4 border-2 border-t-[#64a0d2] border-r-[#28649b] border-b-[#28649b] border-l-[#64a0d2] bg-[#4682b4] leading-3 text-white">${p}</button>`
        ).join('');

        let scale = '';
        for (let i = 0; i < 27; i++) {
            const price = (1.22995 - i * 0.0023).toFixed(5);
            scale += i === 17
                ? '<div class="flex h-[33px] shrink-0 items-center"><span class="ml-px w-full bg-white pl-1 text-black">1.19083</span></div>'
                : `<div class="flex h-[33px] shrink-0 items-center gap-[3px]"><i class="h-px w-[2px] bg-white"></i>${price}</div>`;
        }
        document.getElementById('prices').innerHTML = scale;

        const times = ['23 Nov 2020', '24 Nov 15:30', '25 Nov 07:30', '25 Nov 23:30', '26 Nov 15:30', '27 Nov 07:30', '27 Nov 23:30', '30 Nov 15:30', '1 Dec 07:30',
            '1 Dec 23:30', '2 Dec 15:30', '3 Dec 07:30', '3 Dec 23:30', '4 Dec 15:30', '7 Dec 07:30', '7 Dec 23:30', '8 Dec 15:30', '9 Dec 07:30'];
        document.getElementById('times').innerHTML = times.map(t =>
            `<div class="w-16 shrink-0 whitespace-nowrap"><i class="block h-[3px] w-px bg-white"></i><span class="block leading-3">${t}</span></div>`
        ).join('');
    </script>
</body>
</html>
